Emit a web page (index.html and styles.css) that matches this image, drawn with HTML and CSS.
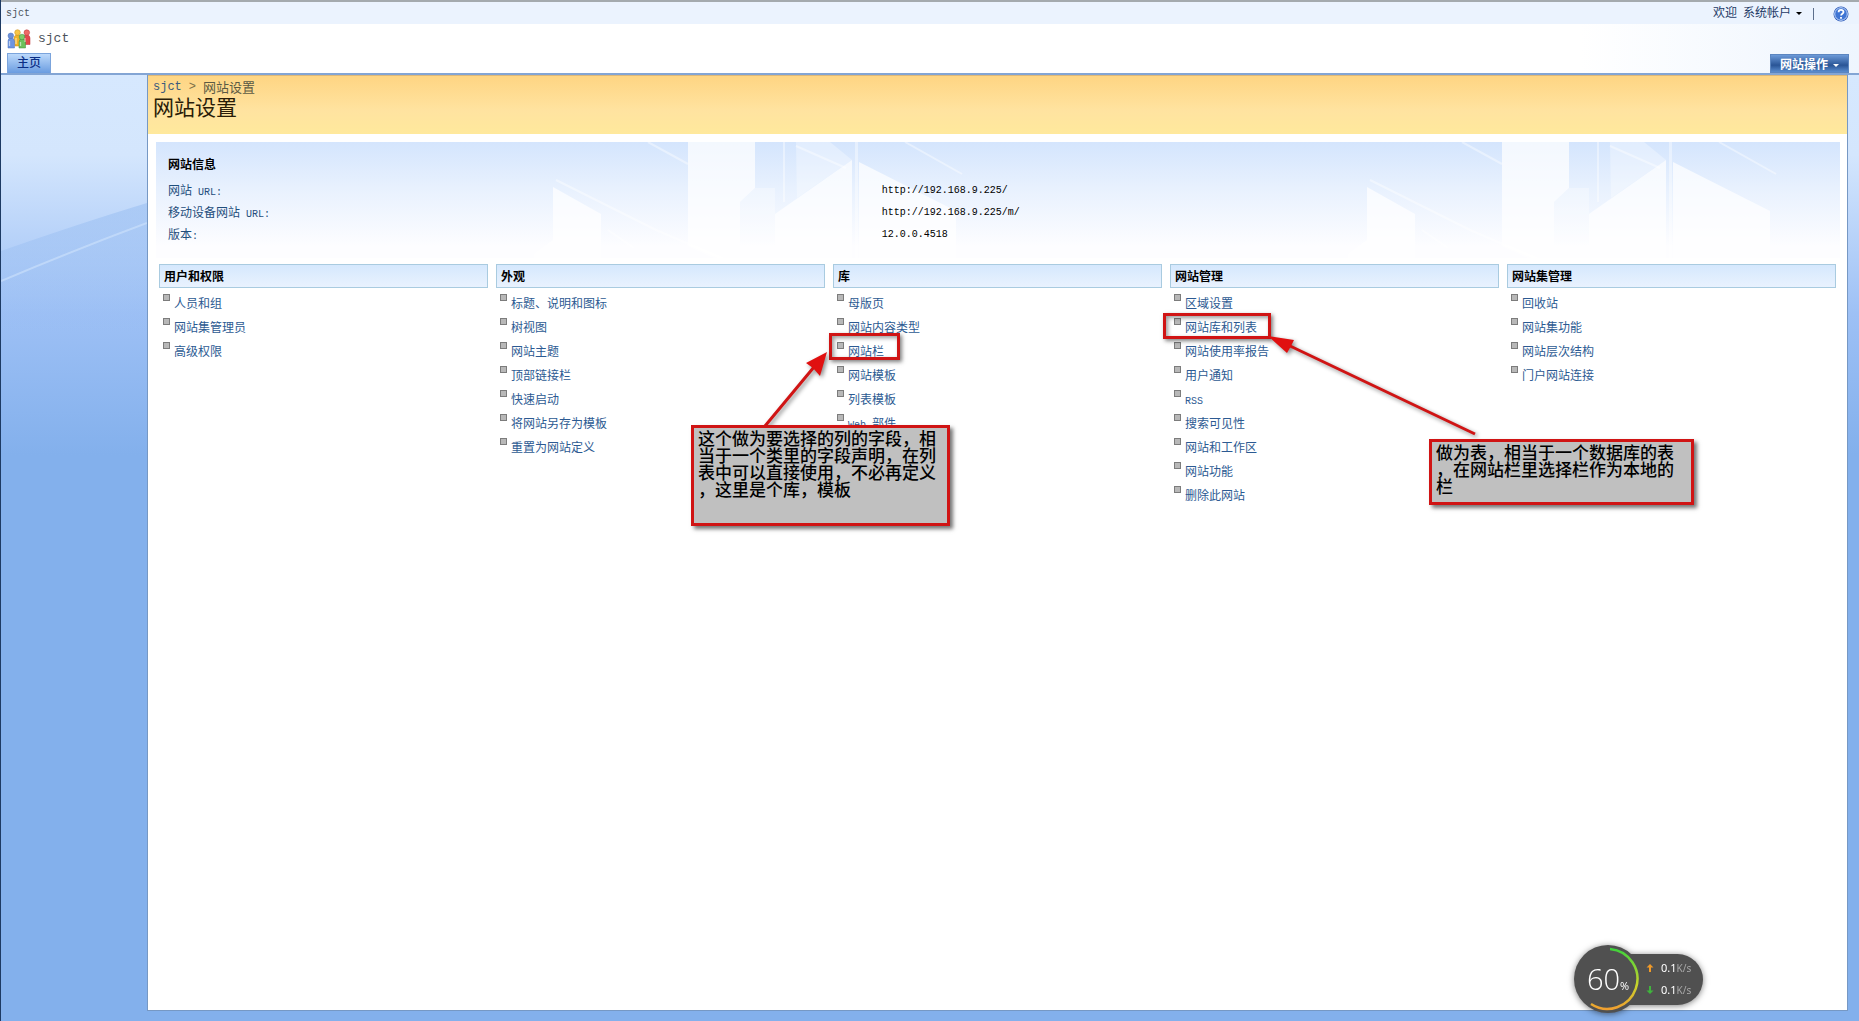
FILE: index.html
```html
<!DOCTYPE html>
<html lang="zh-CN">
<head>
<meta charset="utf-8">
<title>网站设置</title>
<link rel="stylesheet" href="styles.css">
</head>
<body>
<div class="page">
  <div class="topbar">
    <a class="latin" href="#">sjct</a>
    <div class="account">
      <button class="welcome" type="button">欢迎<span class="latin"> </span>系统帐户<span class="caret"></span></button>
      <span class="divider"></span>
      <a class="help" href="#" aria-label="帮助">
        <svg width="16" height="16" viewBox="0 0 16 16"><circle cx="8" cy="8" r="7.5" fill="#2b58b8"/><circle cx="8" cy="8" r="6.3" fill="#3f75d4" stroke="#c4dafa" stroke-width="1"/><path d="M5.6 6.2C5.6 3.2 10.6 3.2 10.5 6c0 1.800-2.400 1.700-2.400 3.600M8 11v1.700" fill="none" stroke="#fff" stroke-width="1.800"/></svg>
      </a>
    </div>
  </div>
  <header class="header">
    <div class="brand">
      <svg width="24" height="20" viewBox="0 0 24 20">
        <g stroke-width=".5">
          <path d="M7 9q0-3 3.500-3T14 9v8H8z" fill="#f0b428" stroke="#c88a18"/><circle cx="10.500" cy="3.500" r="2.800" fill="#f6c648" stroke="#c88a18"/>
          <path d="M16 9q0-3 3.500-3T23 9v6.500h-7z" fill="#e2484c" stroke="#b83036"/><circle cx="19.800" cy="3.600" r="2.800" fill="#ee6a66" stroke="#b83036"/>
          <path d="M1 12q0-3 3-3t3.500 3v7H1z" fill="#6c94e0" stroke="#4a70bc"/><circle cx="3.800" cy="6.800" r="2.800" fill="#6c90d8" stroke="#4a70bc"/>
          <path d="M12 13q0-3 3-3t3.500 3v6H12z" fill="#6cc05c" stroke="#3c8c3c"/><circle cx="15" cy="8" r="2.800" fill="#7ccc6a" stroke="#3c8c3c"/>
        </g>
        <path d="M2.500 12v5M9 9v6M13.500 13v4M18 9v4" stroke="#fff" stroke-opacity=".55" stroke-width="1.300"/>
      </svg>
      <a class="site-name" href="#">sjct</a>
    </div>
    <nav class="tabs">
      <a class="tab" href="#">主页</a>
      <button class="actions" type="button">网站操作<span class="caret"></span></button>
    </nav>
  </header>
  <div class="body">
    <aside class="side">
      <svg class="rays" width="146" height="260" viewBox="0 0 146 260">
        <defs><linearGradient id="ray" x1="0" y1="0" x2="0" y2="1"><stop offset="0" stop-color="#8ab4ee" stop-opacity=".42"/><stop offset="1" stop-color="#8ab4ee" stop-opacity="0"/></linearGradient></defs>
        <path d="M0 176Q80 148 146 128V260H0z" fill="url(#ray)"/>
        <path d="M0 206Q76 174 146 148" fill="none" stroke="#cfe2fc" stroke-opacity=".6" stroke-width="2"/>
      </svg>
    </aside>
    <main class="main">
      <div class="band">
        <div class="crumbs"><a class="latin" href="#">sjct</a><span class="latin sep">&gt;</span><span>网站设置</span></div>
        <h1>网站设置</h1>
      </div>
      <section class="info">
        <svg class="skyline" width="100%" height="116">
          <defs>
            <pattern id="city" width="814" height="116" patternUnits="userSpaceOnUse">
              <g fill="#fff" fill-opacity=".72">
                <path d="M397 45L445 72V116H378V112L397 98z"/>
                <path d="M532 0H599V46L584 60V128L532 104z"/>
                <path d="M619 72L696 18V116H619z"/>
                <path d="M703 20L800 69V116H703z"/>
                <path d="M699 0h3v116h-3z" fill-opacity=".4"/>
              </g>
              <g fill="#fff" fill-opacity=".3">
                <path d="M640 0H674L696 18 641 56z"/>
                <path d="M584 60L599 46H619V116H584z"/>
              </g>
              <path d="M492 0L532 22M749 0L806 32M400 38L500 88L584 124M640 4L690 26M452 88L478 106M628 0V60" fill="none" stroke="#fff" stroke-opacity=".4" stroke-width="2"/>
            </pattern>
          </defs>
          <rect width="100%" height="116" fill="url(#city)"/>
        </svg>
        <h2>网站信息</h2>
        <table>
          <tr><th scope="row">网站<span class="latin"> URL:</span></th><td class="latin">http://192.168.9.225/</td></tr>
          <tr><th scope="row">移动设备网站<span class="latin"> URL:</span></th><td class="latin">http://192.168.9.225/m/</td></tr>
          <tr><th scope="row">版本<span class="latin">:</span></th><td class="latin">12.0.0.4518</td></tr>
        </table>
      </section>
      <div class="columns">
        <section><h3>用户和权限</h3><ul><li><a href="#">人员和组</a></li><li><a href="#">网站集管理员</a></li><li><a href="#">高级权限</a></li></ul></section>
        <section><h3>外观</h3><ul><li><a href="#">标题、说明和图标</a></li><li><a href="#">树视图</a></li><li><a href="#">网站主题</a></li><li><a href="#">顶部链接栏</a></li><li><a href="#">快速启动</a></li><li><a href="#">将网站另存为模板</a></li><li><a href="#">重置为网站定义</a></li></ul></section>
        <section><h3>库</h3><ul><li><a href="#">母版页</a></li><li><a href="#">网站内容类型</a></li><li><a href="#">网站栏</a></li><li><a href="#">网站模板</a></li><li><a href="#">列表模板</a></li><li><a href="#"><span class="latin">Web </span>部件</a></li></ul></section>
        <section><h3>网站管理</h3><ul><li><a href="#">区域设置</a></li><li><a href="#">网站库和列表</a></li><li><a href="#">网站使用率报告</a></li><li><a href="#">用户通知</a></li><li><a class="latin" href="#">RSS</a></li><li><a href="#">搜索可见性</a></li><li><a href="#">网站和工作区</a></li><li><a href="#">网站功能</a></li><li><a href="#">删除此网站</a></li></ul></section>
        <section><h3>网站集管理</h3><ul><li><a href="#">回收站</a></li><li><a href="#">网站集功能</a></li><li><a href="#">网站层次结构</a></li><li><a href="#">门户网站连接</a></li></ul></section>
      </div>
    </main>
  </div>

  <div class="ring ring-column"></div>
  <div class="ring ring-lists"></div>
  <svg class="arrows" width="660" height="110" viewBox="820 330 660 110">
    <g fill="#e01010" stroke="#d01414">
      <path d="M765 426L814 367M1475 434L1288 345" stroke-width="3"/>
      <path d="M827 352L806 363L813 368L820 376zM1268 336L1294 340L1291 346L1287 353z" stroke="none"/>
    </g>
  </svg>
  <div class="note note-column">这个做为要选择的列的字段，相<br>当于一个类里的字段声明，在列<br>表中可以直接使用，不必再定义<br>，这里是个库，模板</div>
  <div class="note note-lists">做为表，相当于一个数据库的表<br>，在网站栏里选择栏作为本地的<br>栏</div>

  <div class="monitor">
    <div class="dial">
      <svg class="arc" width="68" height="68" viewBox="0 0 68 68">
        <defs><linearGradient id="load" x1="0" y1="0" x2="0" y2="1"><stop offset="0" stop-color="#3fd23c"/><stop offset=".6" stop-color="#c8d42c"/><stop offset="1" stop-color="#f0a030"/></linearGradient></defs>
        <path d="M36 4A30 30 0 1 1 17 59" fill="none" stroke="url(#load)" stroke-width="2.500"/>
      </svg>
      <span class="load">60</span><span class="percent">%</span>
    </div>
    <div class="rates">
      <div><svg width="8" height="8" viewBox="0 0 8 8"><path d="M4 0L7.500 3.500H5V8H3V3.500H.5z" fill="#f09a28"/></svg><span>0.1<i>K/s</i></span></div>
      <div><svg width="8" height="8" viewBox="0 0 8 8"><path d="M4 8L.5 4.500H3V0H5V4.500H7.500z" fill="#3fb43c"/></svg><span>0.1<i>K/s</i></span></div>
    </div>
  </div>
</div>
</body>
</html>
```
FILE: styles.css
```css
* { box-sizing: border-box; }
body {
  margin: 0;
  font: 12px/20px "Noto Sans CJK SC", sans-serif;
  color: #000;
}
a { color: #2c5a92; text-decoration: none; }
button { border: 0; padding: 0; background: none; font: inherit; cursor: pointer; }
h1, h2, h3, ul { margin: 0; padding: 0; }
.latin { font-family: "Liberation Mono", monospace; font-size: 10px; }
.caret {
  display: inline-block;
  border: 3px solid transparent;
  border-top-color: currentColor;
  border-bottom: 0;
  margin-left: 5px;
  vertical-align: middle;
}
.page {
  position: relative;
  min-height: 100vh;
  display: flex;
  flex-direction: column;
  border-left: 1px solid #1d3a63;
  overflow: hidden;
}

.topbar {
  display: flex;
  justify-content: space-between;
  align-items: center;
  height: 24px;
  padding: 1px 10px 0 5px;
  border-top: 2px solid #a4aaae;
  background: #ebf3fe;
}
.topbar a.latin { color: #4c535c; }
.account { display: flex; align-items: center; }
.welcome { color: #1e3a66; line-height: 18px; }
.welcome .caret { color: #000; }
.divider { width: 1px; height: 12px; margin: 0 19px 0 11px; background: #5c6f8c; }
.help { display: flex; }

.header {
  display: flex;
  flex-direction: column;
  justify-content: space-between;
  height: 51px;
  padding: 4px 10px 0 6px;
  border-bottom: 2px solid #83a5d4;
  background: linear-gradient(90deg, #fff 85%, #eef5fe);
}
.brand { display: flex; align-items: center; gap: 7px; height: 21px; }
.site-name { font: 13px/20px "Liberation Mono", monospace; color: #4c535c; }
.tabs { display: flex; justify-content: space-between; }
.tab {
  width: 44px;
  height: 20px;
  border: 1px solid #7ba4dc;
  border-bottom: 0;
  background: linear-gradient(#bcd9fb, #6a9ce0);
  color: #0a2f86;
  font-weight: 500;
  text-align: center;
  line-height: 16px;
}
.actions {
  width: 79px;
  height: 19px;
  margin-top: 1px;
  border: 1px solid #5c86c0;
  background: linear-gradient(#6c9ad8, #2a5596 60%, #5a8cce);
  color: #fff;
  font-weight: 700;
  line-height: 16px;
}

.body {
  flex: 1;
  display: flex;
  padding: 0 11px 10px 0;
  background: linear-gradient(#d6e8fe 0, #d4e6fd 80px, #9dc0f5 240px, #83b0ec 380px);
}
.side { flex: 0 0 146px; }
.rays { display: block; }
.main {
  flex: 1;
  border: 1px solid #7698c4;
  border-top: 0;
  background: #fff;
}
.band {
  height: 59px;
  padding: 2px 5px 0;
  border-top: 1px solid #dcb878;
  background: linear-gradient(#fed583, #ffe3a0 60%, #ffe99c);
}
.crumbs { display: flex; font-size: 13px; line-height: 18px; color: #5c5a44; }
.crumbs .latin { font-size: 12px; color: #3c5a7c; }
.crumbs .sep { margin: 0 7px; color: #7c7048; }
.band h1 { font-size: 21px; font-weight: 400; line-height: 20px; color: #2a1c08; }

.info {
  position: relative;
  margin: 8px 7px 0 8px;
  padding: 12px;
  height: 116px;
  background: linear-gradient(#d4e5fd, #e8f1fe 40%, #fdfdff 90%);
}
.skyline { position: absolute; left: 0; top: 0; }
.info h2, .info table { position: relative; }
.info h2 { font-size: 12px; line-height: 20px; margin-bottom: 6px; }
.info table { width: 100%; border-collapse: collapse; }
.info th, .info td { height: 22px; padding: 0; text-align: left; font-weight: 400; line-height: 18px; }
.info th { width: 43%; color: #1f4e7c; }

.columns {
  display: grid;
  grid-template-columns: repeat(5, 1fr);
  gap: 8px;
  padding: 6px 11px 24px 11px;
}
.columns h3 {
  height: 24px;
  padding-left: 4px;
  border: 1px solid #a9cbe0;
  background: linear-gradient(#d5e8fd, #e9f2fe);
  font-size: 12px;
  line-height: 22px;
}
.columns ul { list-style: none; padding: 3px 0 0 4px; }
.columns li { position: relative; height: 24px; padding-left: 11px; line-height: 24px; }
.columns li::before {
  content: "";
  position: absolute;
  left: 0;
  top: 3px;
  width: 5px;
  height: 5px;
  border: 1px solid #7c7c7c;
  background: #b8b8b8;
}

/* Review marks laid over the settings page */
.ring {
  position: absolute;
  border: 3px solid #d01414;
  box-shadow: 2px 2px 4px rgba(0, 0, 0, .5), inset 2px 2px 4px rgba(0, 0, 0, .4);
}
.ring-column { left: 828px; top: 333px; width: 71px; height: 27px; }
.ring-lists { left: 1162px; top: 313px; width: 108px; height: 26px; }
.arrows {
  position: absolute;
  left: 819px;
  top: 330px;
  overflow: visible;
  filter: drop-shadow(2px 2px 2px rgba(0, 0, 0, .45));
}
.note {
  position: absolute;
  padding: 1px 4px;
  border: 3px solid #d01414;
  background: #c0c0c0;
  box-shadow: 3px 3px 4px rgba(0, 0, 0, .55);
  font-size: 17px;
  font-weight: 500;
  line-height: 17px;
  white-space: nowrap;
}
.note-column { left: 690px; top: 425px; width: 259px; height: 101px; }
.note-lists { left: 1428px; top: 439px; width: 265px; height: 66px; }

.monitor {
  position: absolute;
  right: 156px;
  bottom: 8px;
  display: flex;
  align-items: center;
  color: #fff;
  filter: drop-shadow(0 1px 3px rgba(0, 0, 0, .5));
}
.dial {
  position: relative;
  z-index: 1;
  display: flex;
  align-items: baseline;
  width: 68px;
  height: 68px;
  padding-left: 13px;
  border-radius: 50%;
  background: #505050;
  line-height: 68px;
}
.arc { position: absolute; left: 0; top: 0; }
.load { font-family: "Open Sans", sans-serif; font-size: 29px; font-weight: 300; }
.percent { font-family: "Open Sans", sans-serif; font-size: 11px; }
.rates {
  display: flex;
  flex-direction: column;
  justify-content: center;
  width: 95px;
  height: 51px;
  margin-left: -34px;
  padding-left: 38px;
  border-radius: 0 26px 26px 0;
  background: #505050;
  font-family: "Noto Sans", sans-serif;
  font-size: 11px;
  line-height: 21px;
}
.rates div { display: flex; align-items: center; gap: 7px; }
.rates i { font-style: normal; color: #a8a8a8; font-size: 10px; }
```
